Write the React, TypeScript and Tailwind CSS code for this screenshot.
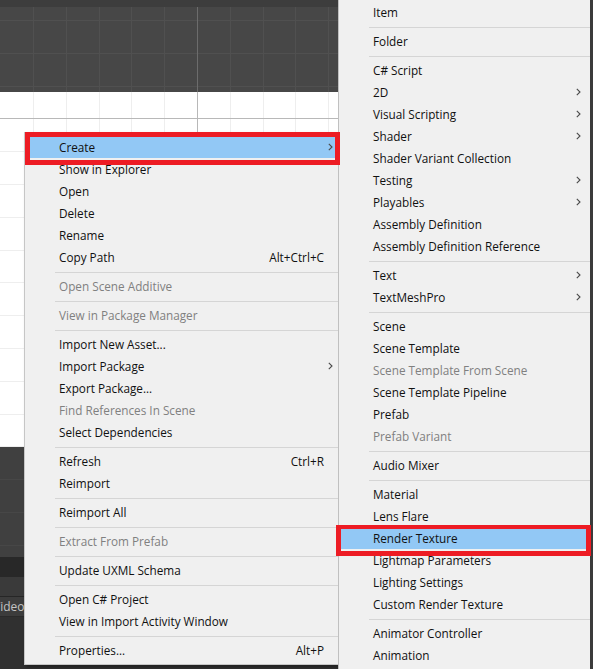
type Row =
  | { sep: true }
  | { label: string; shortcut?: string; sub?: boolean; disabled?: boolean; active?: boolean };

const leftMenu: Row[] = [
  { label: 'Create', sub: true, active: true },
  { label: 'Show in Explorer' },
  { label: 'Open' },
  { label: 'Delete' },
  { label: 'Rename' },
  { label: 'Copy Path', shortcut: 'Alt+Ctrl+C' },
  { sep: true },
  { label: 'Open Scene Additive', disabled: true },
  { sep: true },
  { label: 'View in Package Manager', disabled: true },
  { sep: true },
  { label: 'Import New Asset...' },
  { label: 'Import Package', sub: true },
  { label: 'Export Package...' },
  { label: 'Find References In Scene', disabled: true },
  { label: 'Select Dependencies' },
  { sep: true },
  { label: 'Refresh', shortcut: 'Ctrl+R' },
  { label: 'Reimport' },
  { sep: true },
  { label: 'Reimport All' },
  { sep: true },
  { label: 'Extract From Prefab', disabled: true },
  { sep: true },
  { label: 'Update UXML Schema' },
  { sep: true },
  { label: 'Open C# Project' },
  { label: 'View in Import Activity Window' },
  { sep: true },
  { label: 'Properties...', shortcut: 'Alt+P' },
];

const createMenu: Row[] = [
  { label: 'Item' },
  { sep: true },
  { label: 'Folder' },
  { sep: true },
  { label: 'C# Script' },
  { label: '2D', sub: true },
  { label: 'Visual Scripting', sub: true },
  { label: 'Shader', sub: true },
  { label: 'Shader Variant Collection' },
  { label: 'Testing', sub: true },
  { label: 'Playables', sub: true },
  { label: 'Assembly Definition' },
  { label: 'Assembly Definition Reference' },
  { sep: true },
  { label: 'Text', sub: true },
  { label: 'TextMeshPro', sub: true },
  { sep: true },
  { label: 'Scene' },
  { label: 'Scene Template' },
  { label: 'Scene Template From Scene', disabled: true },
  { label: 'Scene Template Pipeline' },
  { label: 'Prefab' },
  { label: 'Prefab Variant', disabled: true },
  { sep: true },
  { label: 'Audio Mixer' },
  { sep: true },
  { label: 'Material' },
  { label: 'Lens Flare' },
  { label: 'Render Texture', active: true },
  { label: 'Lightmap Parameters' },
  { label: 'Lighting Settings' },
  { label: 'Custom Render Texture' },
  { sep: true },
  { label: 'Animator Controller' },
  { label: 'Animation' },
];

function Chevron() {
  return (
    <svg width="5" height="8" viewBox="0 0 5 8" className="block">
      <path d="M0.8 0.8 L4 4 L0.8 7.2" fill="none" stroke="#4a4a4a" strokeWidth="1.1" />
    </svg>
  );
}

function Menu({ rows, arrowPad }: { rows: Row[]; arrowPad: string }) {
  return (
    <div className="flex flex-col">
      {rows.map((r, i) =>
        'sep' in r ? (
          <div key={i} className="pt-[4px] pb-[2px] pl-[30px]">
            <div className="h-px bg-[#d5d5d5]" />
          </div>
        ) : (
          <div
            key={i}
            className={`flex items-center h-[22px] pl-[34px] ${arrowPad} ${r.active ? 'bg-[#92c8f5]' : ''}`}
          >
            <span className={`flex-1 whitespace-nowrap ${r.disabled ? 'text-[#808080]' : 'text-[#111111]'}`}>
              {r.label}
            </span>
            {r.shortcut && <span className="text-[#111111] mr-[9px]">{r.shortcut}</span>}
            {r.sub && <Chevron />}
          </div>
        )
      )}
    </div>
  );
}

function Grid({
  top,
  height,
  fill,
  line,
  axis,
  hAxis,
}: {
  top: number;
  height: number;
  fill: string;
  line: string;
  axis: string;
  hAxis?: number;
}) {
  const xs: number[] = [];
  for (let x = 33; x < 593; x += 32.8) xs.push(Math.round(x));
  const ys: number[] = [];
  for (let y = 20; y < 669; y += 32.8) {
    const r = Math.round(y) - top;
    if (r >= 0 && r < height) ys.push(r);
  }
  return (
    <svg width={593} height={height} className="block">
      <rect width={593} height={height} fill={fill} />
      {ys.map((y) => (
        <rect key={'h' + y} x={0} y={y} width={593} height={1} fill={line} />
      ))}
      {xs.map((x) => (
        <rect key={'v' + x} x={x} y={0} width={1} height={height} fill={line} />
      ))}
      <rect x={197} y={0} width={1} height={height} fill={axis} />
      {hAxis !== undefined && <rect x={0} y={hAxis - top} width={593} height={1} fill={axis} />}
    </svg>
  );
}

export default function App() {
  return (
    <div className="relative w-[593px] h-[669px] overflow-hidden bg-[#303030] [font-family:'Open_Sans','Noto_Sans_CJK_KR',sans-serif] text-[11.75px] leading-[22px]">
      {/* scene view behind the menus */}
      <div className="flex flex-col">
        <div className="h-[7px] bg-[#3d3d3d]" />
        <Grid top={7} height={85} fill="#474747" line="#505050" axis="#6c6c6c" />
        <Grid top={92} height={355} fill="#ffffff" line="#eeeeee" axis="#b8b8b8" hAxis={118} />
        <Grid top={447} height={110} fill="#404040" line="#474747" axis="#474747" />
        <div className="h-[20px] bg-[#282828]" />
        <div className="h-[20px] bg-[#3a3a3a] border-b border-[#262626]" />
        <div className="h-[20px] bg-[#3c3c3c] border-b border-[#2a2a2a] flex items-center">
          <span className="ml-[-7px] text-[12px] text-[#c4c4c4]">Video</span>
        </div>
        <div className="flex-1 bg-[#303030]" />
      </div>

      {/* project context menu */}
      <div className="absolute left-[24px] top-[132px] w-[315px] h-[533px] bg-[#f0f0f0] border border-[#c6c6c6] pt-[3px] pb-[4px] shadow-[2px_2px_3px_rgba(0,0,0,0.35)]">
        <Menu rows={leftMenu} arrowPad="pr-[5px]" />
      </div>

      {/* create submenu */}
      <div className="absolute left-[338px] top-[-3px] w-[255px] h-[700px] bg-[#f0f0f0] border-l border-t border-[#c0c0c0] border-r-[3px] border-r-[#3b3b3b] pt-[3px]">
        <Menu rows={createMenu} arrowPad="pr-[9px]" />
      </div>

      {/* red highlight frames */}
      <div className="absolute left-[25px] top-[132px] w-[315px] h-[33px] border-[5px] border-[#ed1c24]" />
      <div className="absolute left-[336px] top-[525px] w-[255px] h-[31px] border-[5px] border-t-[4px] border-[#ed1c24]" />
    </div>
  );
}
